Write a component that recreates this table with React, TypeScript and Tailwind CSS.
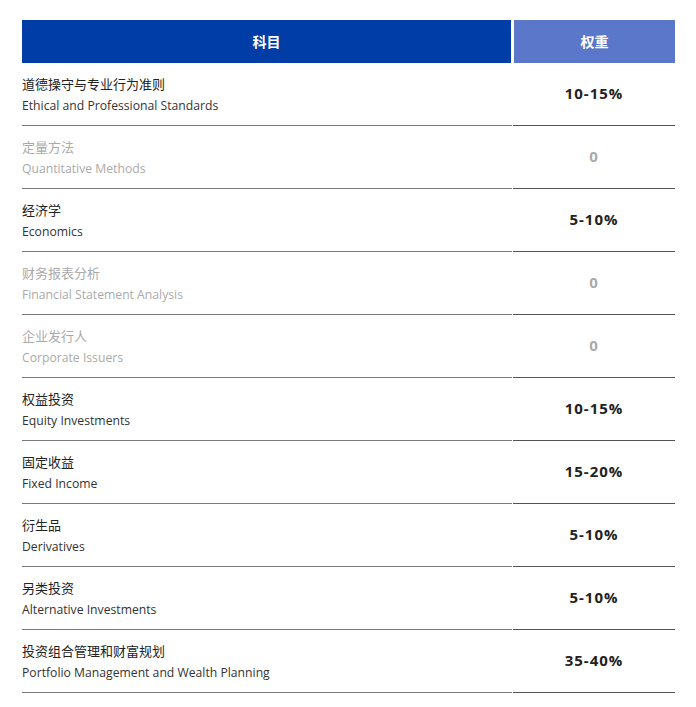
import React from 'react';

type Row = { zh: string; en: string; weight: string; muted?: boolean };

const rows: Row[] = [
  { zh: '道德操守与专业行为准则', en: 'Ethical and Professional Standards', weight: '10-15%' },
  { zh: '定量方法', en: 'Quantitative Methods', weight: '0', muted: true },
  { zh: '经济学', en: 'Economics', weight: '5-10%' },
  { zh: '财务报表分析', en: 'Financial Statement Analysis', weight: '0', muted: true },
  { zh: '企业发行人', en: 'Corporate Issuers', weight: '0', muted: true },
  { zh: '权益投资', en: 'Equity Investments', weight: '10-15%' },
  { zh: '固定收益', en: 'Fixed Income', weight: '15-20%' },
  { zh: '衍生品', en: 'Derivatives', weight: '5-10%' },
  { zh: '另类投资', en: 'Alternative Investments', weight: '5-10%' },
  { zh: '投资组合管理和财富规划', en: 'Portfolio Management and Wealth Planning', weight: '35-40%' },
];

const font = { fontFamily: '"Open Sans", "Noto Sans CJK SC", sans-serif' };

const App = () => {
  return (
    <div className="w-[696px] h-[707px] bg-white pt-5 pl-[22px] overflow-hidden" style={font}>
      <div className="w-[653px]">
        {/* header */}
        <div className="flex gap-[3px] h-[43px] text-white text-[14px] font-bold">
          <div className="w-[489px] bg-[#003da6] flex items-center justify-center">科目</div>
          <div className="flex-1 bg-[#5b77c9] flex items-center justify-center">权重</div>
        </div>

        {rows.map((r, i) => (
          <div key={i} className="flex gap-[1px] h-[63px]">
            <div className="w-[490px] border-b border-[#7a7a7a] flex flex-col justify-center pt-[2px]">
              <div className={`text-[13px] leading-[20px] ${r.muted ? 'text-[#aaaaaa]' : 'text-[#222222]'}`}>{r.zh}</div>
              <div className={`text-[12.2px] leading-[20px] mt-[2px] ${r.muted ? 'text-[#aaaaaa]' : 'text-[#333333]'}`}>{r.en}</div>
            </div>
            <div className={`flex-1 border-b border-[#555555] flex items-center justify-center pb-[2px] text-[15px] tracking-[1px] font-bold ${r.muted ? 'text-[#aaaaaa]' : 'text-[#222222]'}`}>
              {r.weight}
            </div>
          </div>
        ))}
      </div>
    </div>
  );
};

export default App;
